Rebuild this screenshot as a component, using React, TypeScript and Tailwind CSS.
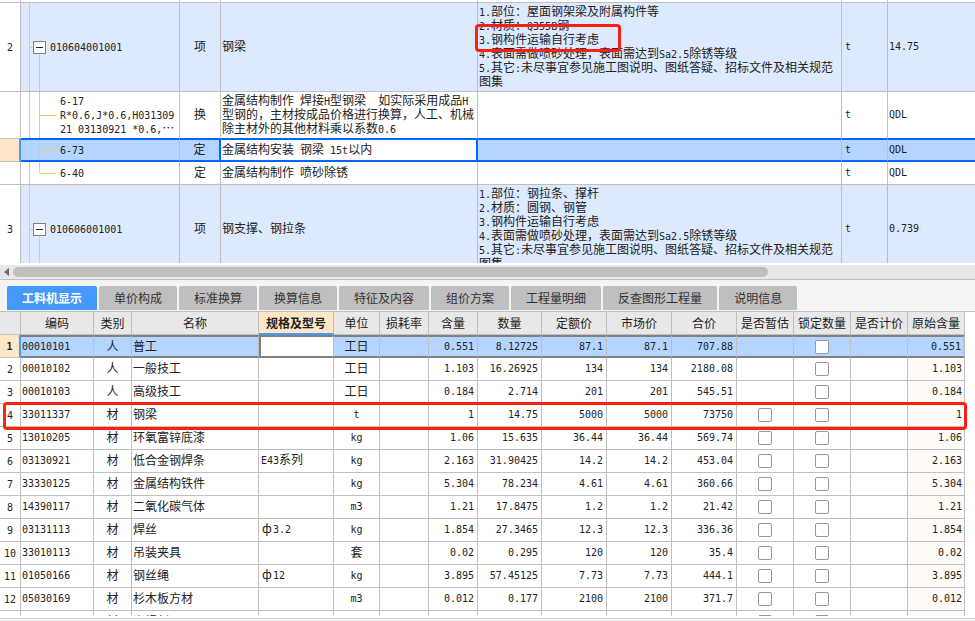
import { clsx } from "clsx";
import { useState } from "react";

interface IBillRow {
	no?: string;
	kind: "group" | "child";
	code: string[];
	last?: boolean;
	selected?: boolean;
	type: string;
	name: string[];
	features: string[];
	marked?: boolean;
	unit: string;
	qty: string;
	height: string;
}

interface IResource {
	code: string;
	type: string;
	name: string;
	spec?: string;
	unit: string;
	values: string[];
	original: string;
	estimable?: boolean;
}

const billRows: IBillRow[] = [
	{
		no: "2",
		kind: "group",
		code: ["010604001001"],
		type: "项",
		name: ["钢梁"],
		features: [
			"1.部位：屋面钢架梁及附属构件等",
			"2.材质：Q355B钢",
			"3.钢构件运输自行考虑",
			"4.表面需做喷砂处理，表面需达到Sa2.5除锈等级",
			"5.其它:未尽事宜参见施工图说明、图纸答疑、招标文件及相关规范",
			"图集",
		],
		marked: true,
		unit: "t",
		qty: "14.75",
		height: "h-[89px]",
	},
	{
		kind: "child",
		code: ["6-17", "R*0.6,J*0.6,H031309", "21 03130921 *0.6,…"],
		type: "换",
		name: [
			"金属结构制作 焊接H型钢梁  如实际采用成品H",
			"型钢的，主材按成品价格进行换算，人工、机械",
			"除主材外的其他材料乘以系数0.6",
		],
		features: [],
		unit: "t",
		qty: "QDL",
		height: "h-[47px]",
	},
	{
		kind: "child",
		code: ["6-73"],
		selected: true,
		type: "定",
		name: ["金属结构安装 钢梁 15t以内"],
		features: [],
		unit: "t",
		qty: "QDL",
		height: "h-[23px]",
	},
	{
		kind: "child",
		code: ["6-40"],
		last: true,
		type: "定",
		name: ["金属结构制作 喷砂除锈"],
		features: [],
		unit: "t",
		qty: "QDL",
		height: "h-[23px]",
	},
	{
		no: "3",
		kind: "group",
		code: ["010606001001"],
		type: "项",
		name: ["钢支撑、钢拉条"],
		features: [
			"1.部位：钢拉条、撑杆",
			"2.材质：圆钢、钢管",
			"3.钢构件运输自行考虑",
			"4.表面需做喷砂处理，表面需达到Sa2.5除锈等级",
			"5.其它:未尽事宜参见施工图说明、图纸答疑、招标文件及相关规范",
			"图集",
		],
		unit: "t",
		qty: "0.739",
		height: "h-[89px]",
	},
];

const tabs = [
	"工料机显示",
	"单价构成",
	"标准换算",
	"换算信息",
	"特征及内容",
	"组价方案",
	"工程量明细",
	"反查图形工程量",
	"说明信息",
];

const columns = [
	{ title: "编码", width: "w-[73px]" },
	{ title: "类别", width: "w-[38px]" },
	{ title: "名称", width: "" },
	{ title: "规格及型号", width: "w-[75px]" },
	{ title: "单位", width: "w-[46px]" },
	{ title: "损耗率", width: "w-[49px]" },
	{ title: "含量", width: "w-[49px]" },
	{ title: "数量", width: "w-[64px]" },
	{ title: "定额价", width: "w-[65px]" },
	{ title: "市场价", width: "w-[65px]" },
	{ title: "合价", width: "w-[65px]" },
	{ title: "是否暂估", width: "w-[57px]" },
	{ title: "锁定数量", width: "w-[57px]" },
	{ title: "是否计价", width: "w-[57px]" },
	{ title: "原始含量", width: "w-[57px]" },
];

// values: 含量, 数量, 定额价, 市场价, 合价
const resources: IResource[] = [
	{ code: "00010101", type: "人", name: "普工", unit: "工日", values: ["0.551", "8.12725", "87.1", "87.1", "707.88"], original: "0.551" },
	{ code: "00010102", type: "人", name: "一般技工", unit: "工日", values: ["1.103", "16.26925", "134", "134", "2180.08"], original: "1.103" },
	{ code: "00010103", type: "人", name: "高级技工", unit: "工日", values: ["0.184", "2.714", "201", "201", "545.51"], original: "0.184" },
	{ code: "33011337", type: "材", name: "钢梁", unit: "t", values: ["1", "14.75", "5000", "5000", "73750"], original: "1", estimable: true },
	{ code: "13010205", type: "材", name: "环氧富锌底漆", unit: "kg", values: ["1.06", "15.635", "36.44", "36.44", "569.74"], original: "1.06", estimable: true },
	{ code: "03130921", type: "材", name: "低合金钢焊条", spec: "E43系列", unit: "kg", values: ["2.163", "31.90425", "14.2", "14.2", "453.04"], original: "2.163", estimable: true },
	{ code: "33330125", type: "材", name: "金属结构铁件", unit: "kg", values: ["5.304", "78.234", "4.61", "4.61", "360.66"], original: "5.304", estimable: true },
	{ code: "14390117", type: "材", name: "二氧化碳气体", unit: "m3", values: ["1.21", "17.8475", "1.2", "1.2", "21.42"], original: "1.21", estimable: true },
	{ code: "03131113", type: "材", name: "焊丝", spec: "ф3.2", unit: "kg", values: ["1.854", "27.3465", "12.3", "12.3", "336.36"], original: "1.854", estimable: true },
	{ code: "33010113", type: "材", name: "吊装夹具", unit: "套", values: ["0.02", "0.295", "120", "120", "35.4"], original: "0.02", estimable: true },
	{ code: "01050166", type: "材", name: "钢丝绳", spec: "ф12", unit: "kg", values: ["3.895", "57.45125", "7.73", "7.73", "444.1"], original: "3.895", estimable: true },
	{ code: "05030169", type: "材", name: "杉木板方材", unit: "m3", values: ["0.012", "0.177", "2100", "2100", "371.7"], original: "0.012", estimable: true },
	{ code: "", type: "材", name: "炭焊剂", unit: "", values: ["", "", "", "", ""], original: "", estimable: true },
];

// Latin runs are set in a half-width mono so they line up with the full-width characters
function Txt({ children }: { children: string }) {
	return (
		<>
			{children.split(/([\x20-\x7e]+)/).map((run, i) => {
				if (i % 2) {
					return (
						<span
							key={i}
							className="font-['DejaVu_Sans_Mono',monospace] text-[10px]"
						>
							{run}
						</span>
					);
				}
				if (run === "ф") {
					return (
						<span key={i} className="inline-block w-3 text-center">
							{run}
						</span>
					);
				}
				return run;
			})}
		</>
	);
}

function Lines({ lines }: { lines: string[] }) {
	return (
		<>
			{lines.map((line) => (
				<div key={line} className="h-[14px] whitespace-pre">
					<Txt>{line}</Txt>
				</div>
			))}
		</>
	);
}

function TreeCell({ row }: { row: IBillRow }) {
	const [open, setOpen] = useState(true);

	if (row.kind === "group") {
		return (
			<div className="flex h-full">
				<div className="w-[9px] border-r border-r-[#ffc470]" />
				<div className="h-px w-[3px] self-center bg-[#ffc470]" />
				<div className="flex w-[13px] flex-col items-center">
					<div className="flex-1" />
					<button
						type="button"
						aria-label={open ? "收起" : "展开"}
						onClick={() => setOpen(!open)}
						className="flex h-[13px] w-[13px] items-center justify-center border border-[#808080] bg-white"
					>
						<span className="h-px w-[7px] bg-[#222]" />
					</button>
					<div className="w-px flex-1 bg-[#ffc470]" />
				</div>
				<div className="self-center pb-[2px] pl-1">
					<Lines lines={row.code} />
				</div>
			</div>
		);
	}

	return (
		<div className="flex h-full">
			<div className="w-[9px] border-r border-r-[#ffc470]" />
			<div
				className={clsx(
					"w-[10px] border-r border-r-[#ffc470]",
					row.last && "h-1/2",
				)}
			/>
			<div className="h-px w-4 self-center bg-[#ffc470]" />
			<div className="self-center pb-[2px] pl-1">
				<Lines lines={row.code} />
			</div>
		</div>
	);
}

function BillTable() {
	return (
		<table className="w-full table-fixed border-separate border-spacing-0">
			<colgroup>
				<col className="w-[21px]" />
				<col className="w-[159px]" />
				<col className="w-[41px]" />
				<col className="w-[257px]" />
				<col />
				<col className="w-[46px]" />
				<col className="w-[87px]" />
			</colgroup>
			<tbody>
				<tr>
					{[0, 1, 2, 3, 4, 5, 6].map((i) => (
						<td
							key={i}
							className="h-[3px] border-b border-r border-[#bfbfbf] p-0 last:border-r-0"
						/>
					))}
				</tr>
				{billRows.map((row, index) => {
					const beforeSelected = billRows[index + 1]?.selected;
					const cell = clsx(
						"p-0",
						row.height,
						row.selected
							? "border-b-2 border-t border-y-[#0066ff]"
							: "border-b",
						!row.selected &&
							(beforeSelected ? "border-b-[#0066ff]" : "border-b-[#bfbfbf]"),
						row.kind === "group" && "bg-[#dde9fd]",
					);
					const line = "border-r border-r-[#bfbfbf]";
					const fill = row.selected && "bg-[#b3d5ff]";
					return (
						<tr key={row.code[0]}>
							<td
								className={clsx(
									"border-b border-r border-b-[#bfbfbf] p-0 text-center",
									row.selected
										? "border-r-2 border-r-[#4499ff] bg-[#ffe6c7]"
										: "border-r-[#bfbfbf]",
								)}
							>
								<Txt>{row.no ?? ""}</Txt>
							</td>
							<td className={clsx(cell, line, fill)}>
								<TreeCell row={row} />
							</td>
							<td
								className={clsx(
									cell,
									fill,
									"pb-[2px] text-center",
									row.selected ? "border-r-2 border-r-[#0066ff]" : line,
								)}
							>
								{row.type}
							</td>
							<td
								className={clsx(
									cell,
									"pb-[2px] pl-px",
									row.selected ? "border-r-2 border-r-[#0066ff]" : line,
								)}
							>
								<Lines lines={row.name} />
							</td>
							<td className={clsx(cell, line, fill, "relative pb-[2px] pl-px")}>
								<Lines lines={row.features} />
								{row.marked && (
									<div className="absolute -left-[3px] top-[21px] h-7 w-[146px] rounded-sm border-3 border-[#ff1f12]" />
								)}
							</td>
							<td className={clsx(cell, line, fill, "pb-[2px] pl-[3px]")}>
								<Txt>{row.unit}</Txt>
							</td>
							<td className={clsx(cell, fill, "pb-[2px] pl-px")}>
								<Txt>{row.qty}</Txt>
							</td>
						</tr>
					);
				})}
			</tbody>
		</table>
	);
}

function Check({ label }: { label: string }) {
	return (
		<input
			type="checkbox"
			aria-label={label}
			className="mx-auto block h-[14px] w-[14px] appearance-none rounded-xs border border-[#999] bg-white checked:bg-[#4499ff]"
		/>
	);
}

function ResourceTable() {
	return (
		<table className="w-full table-fixed border-separate border-spacing-0">
			<colgroup>
				<col className="w-[21px]" />
				{columns.map((col) => (
					<col key={col.title} className={col.width} />
				))}
			</colgroup>
			<thead>
				<tr className="h-[23px] bg-[#e8e8e8]">
					<th className="border-b border-r border-[#bfbfbf] p-0" />
					{columns.map((col) => (
						<th
							key={col.title}
							className={clsx(
								"whitespace-nowrap border-r border-r-[#bfbfbf] p-0",
								col.title === "规格及型号"
									? "border-b-2 border-b-[#4499ff] bg-[#ffe6c7] font-bold"
									: "border-b border-b-[#bfbfbf] font-normal",
							)}
						>
							{col.title}
						</th>
					))}
				</tr>
			</thead>
			<tbody>
				{resources.map((item, index) => {
					const active = index === 0;
					const box = clsx(
						"h-[23px] whitespace-nowrap p-0 border-r",
						active
							? "border-y-2 border-y-[#808080] border-r-[#bfbfbf]"
							: "border-b border-[#bfbfbf]",
					);
					const cell = clsx(box, "pb-[2px]");
					const fill = active && "bg-[#b3d5ff]";
					return (
						<tr key={index}>
							<td
								className={clsx(
									"h-[23px] border-b border-[#bfbfbf] p-0 text-center",
									active
										? "border-r-2 border-r-[#4499ff] bg-[#ffe6c7] font-bold"
										: "border-r",
								)}
							>
								{index < 12 && <Txt>{String(index + 1)}</Txt>}
							</td>
							<td className={clsx(cell, fill, "pl-px")}>
								<Txt>{item.code}</Txt>
							</td>
							<td className={clsx(cell, fill, "text-center")}>{item.type}</td>
							<td className={clsx(cell, fill, "pl-px")}>{item.name}</td>
							<td
								className={clsx(
									cell,
									active ? "border-x-2 border-x-[#808080]" : "pl-[2px]",
								)}
							>
								<Txt>{item.spec ?? ""}</Txt>
							</td>
							<td className={clsx(cell, fill, "text-center")}>
								<Txt>{item.unit}</Txt>
							</td>
							<td className={clsx(cell, fill)} />
							{item.values.map((value, i) => (
								<td key={i} className={clsx(cell, fill, "pr-[3px] text-right")}>
									<Txt>{value}</Txt>
								</td>
							))}
							<td className={clsx(box, fill)}>
								{item.estimable && <Check label={`是否暂估 ${item.name}`} />}
							</td>
							<td className={clsx(box, fill)}>
								<Check label={`锁定数量 ${item.name}`} />
							</td>
							<td className={clsx(cell, fill)} />
							<td
								className={clsx(
									cell,
									"pr-[2px] text-right",
									active
										? "border-r-2 border-r-[#808080] bg-[#b3d5ff]"
										: "bg-[#fffbf6]",
								)}
							>
								<Txt>{item.original}</Txt>
							</td>
						</tr>
					);
				})}
			</tbody>
		</table>
	);
}

export default function App() {
	const [activeTab, setActiveTab] = useState(tabs[0]);

	return (
		<div
			lang="zh-CN"
			className="flex h-screen flex-col overflow-hidden bg-white font-['Noto_Sans_CJK_SC',sans-serif] text-[12px] leading-[14px] text-[#222]"
		>
			<div className="h-[263px] shrink-0 overflow-hidden">
				<BillTable />
			</div>

			<div className="mt-[2px] flex h-[14px] shrink-0 items-center bg-[#e8e8e8] pl-1">
				<svg width="5" height="8" viewBox="0 0 5 8" fill="#6b6b6b">
					<path d="M5 0v8L0 4z" />
				</svg>
				<div className="ml-1 h-[10px] w-7/9 rounded-full bg-[#bfbfbf]" />
			</div>

			<div className="shrink-0 border-y border-[#bfbfbf] bg-[#f4f4f4] pb-px pl-[7px] pt-[6px]">
				<div role="tablist" className="flex gap-[2px]">
					{tabs.map((tab) => (
						<button
							key={tab}
							type="button"
							role="tab"
							aria-selected={tab === activeTab}
							onClick={() => setActiveTab(tab)}
							className={clsx(
								"h-6 whitespace-nowrap rounded-t-xs px-[15px]",
								tab === activeTab
									? "bg-[#4499ff] font-bold text-white"
									: "bg-[#bfbfbf] text-[#333]",
							)}
						>
							{tab}
						</button>
					))}
				</div>
			</div>

			<div className="relative min-h-0 flex-1 overflow-hidden pr-[10px]">
				<ResourceTable />
				<div className="absolute left-[3px] right-[8px] top-[90px] h-7 rounded-sm border-3 border-[#ff1f12]" />
			</div>
			<div className="mt-[2px] h-[3px] shrink-0 border-t border-[#d0d0d0] bg-[#f4f4f4]" />
		</div>
	);
}
